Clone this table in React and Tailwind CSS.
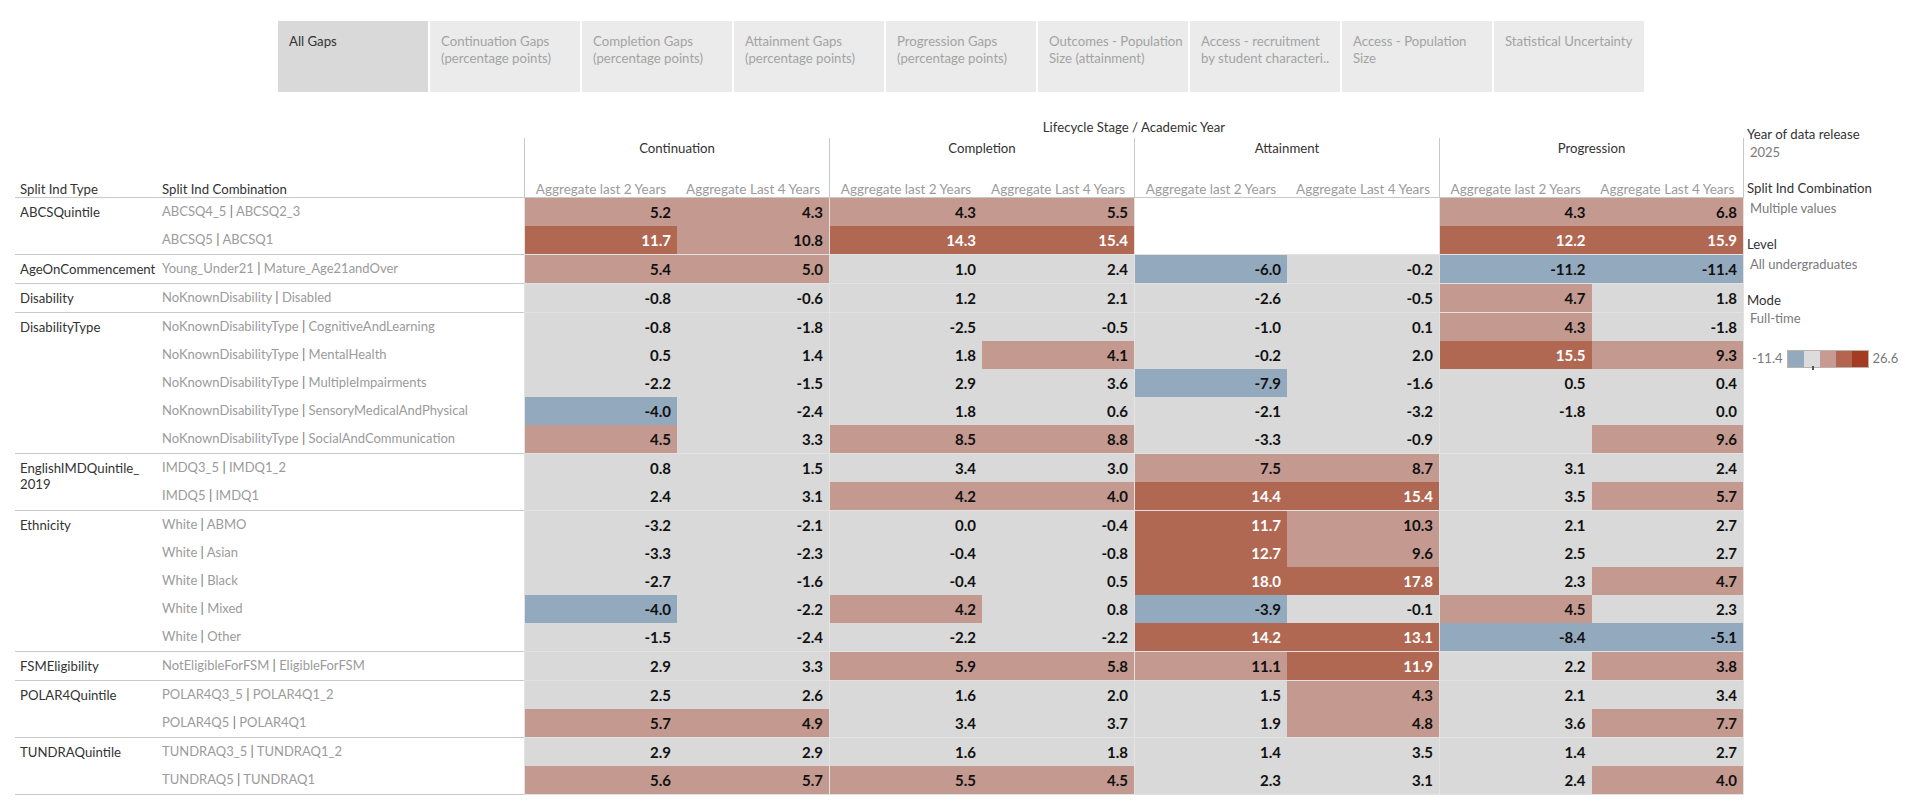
import React from 'react';

const tabs = [
  ['All Gaps', ''],
  ['Continuation Gaps', '(percentage points)'],
  ['Completion Gaps', '(percentage points)'],
  ['Attainment Gaps', '(percentage points)'],
  ['Progression Gaps', '(percentage points)'],
  ['Outcomes - Population', 'Size (attainment)'],
  ['Access - recruitment', 'by student characteri..'],
  ['Access - Population', 'Size'],
  ['Statistical Uncertainty', ''],
];

const stages = ['Continuation', 'Completion', 'Attainment', 'Progression'];

// last letter of each token is the cell tone
const tone = {
  g: 'bg-[#d9d9d9] text-[#111]',
  l: 'bg-[#c49a90] text-[#111]',
  d: 'bg-[#b06853] text-white',
  b: 'bg-[#93a9bd] text-[#111]',
  w: 'bg-white',
  e: 'bg-[#d9d9d9]',
};

const groups = [
  { type: ['ABCSQuintile'], rows: [
    ['ABCSQ4_5 | ABCSQ2_3', '5.2l 4.3l 4.3l 5.5l w w 4.3l 6.8l'],
    ['ABCSQ5 | ABCSQ1', '11.7d 10.8l 14.3d 15.4d w w 12.2d 15.9d'],
  ] },
  { type: ['AgeOnCommencement'], rows: [
    ['Young_Under21 | Mature_Age21andOver', '5.4l 5.0l 1.0g 2.4g -6.0b -0.2g -11.2b -11.4b'],
  ] },
  { type: ['Disability'], rows: [
    ['NoKnownDisability | Disabled', '-0.8g -0.6g 1.2g 2.1g -2.6g -0.5g 4.7l 1.8g'],
  ] },
  { type: ['DisabilityType'], rows: [
    ['NoKnownDisabilityType | CognitiveAndLearning', '-0.8g -1.8g -2.5g -0.5g -1.0g 0.1g 4.3l -1.8g'],
    ['NoKnownDisabilityType | MentalHealth', '0.5g 1.4g 1.8g 4.1l -0.2g 2.0g 15.5d 9.3l'],
    ['NoKnownDisabilityType | MultipleImpairments', '-2.2g -1.5g 2.9g 3.6g -7.9b -1.6g 0.5g 0.4g'],
    ['NoKnownDisabilityType | SensoryMedicalAndPhysical', '-4.0b -2.4g 1.8g 0.6g -2.1g -3.2g -1.8g 0.0g'],
    ['NoKnownDisabilityType | SocialAndCommunication', '4.5l 3.3g 8.5l 8.8l -3.3g -0.9g e 9.6l'],
  ] },
  { type: ['EnglishIMDQuintile_', '2019'], rows: [
    ['IMDQ3_5 | IMDQ1_2', '0.8g 1.5g 3.4g 3.0g 7.5l 8.7l 3.1g 2.4g'],
    ['IMDQ5 | IMDQ1', '2.4g 3.1g 4.2l 4.0l 14.4d 15.4d 3.5g 5.7l'],
  ] },
  { type: ['Ethnicity'], rows: [
    ['White | ABMO', '-3.2g -2.1g 0.0g -0.4g 11.7d 10.3l 2.1g 2.7g'],
    ['White | Asian', '-3.3g -2.3g -0.4g -0.8g 12.7d 9.6l 2.5g 2.7g'],
    ['White | Black', '-2.7g -1.6g -0.4g 0.5g 18.0d 17.8d 2.3g 4.7l'],
    ['White | Mixed', '-4.0b -2.2g 4.2l 0.8g -3.9b -0.1g 4.5l 2.3g'],
    ['White | Other', '-1.5g -2.4g -2.2g -2.2g 14.2d 13.1d -8.4b -5.1b'],
  ] },
  { type: ['FSMEligibility'], rows: [
    ['NotEligibleForFSM | EligibleForFSM', '2.9g 3.3g 5.9l 5.8l 11.1l 11.9d 2.2g 3.8l'],
  ] },
  { type: ['POLAR4Quintile'], rows: [
    ['POLAR4Q3_5 | POLAR4Q1_2', '2.5g 2.6g 1.6g 2.0g 1.5g 4.3l 2.1g 3.4g'],
    ['POLAR4Q5 | POLAR4Q1', '5.7l 4.9l 3.4g 3.7g 1.9g 4.8l 3.6g 7.7l'],
  ] },
  { type: ['TUNDRAQuintile'], rows: [
    ['TUNDRAQ3_5 | TUNDRAQ1_2', '2.9g 2.9g 1.6g 1.8g 1.4g 3.5g 1.4g 2.7g'],
    ['TUNDRAQ5 | TUNDRAQ1', '5.6l 5.7l 5.5l 4.5l 2.3g 3.1g 2.4g 4.0l'],
  ] },
];

function parse(str) {
  return str.split(' ').map((t) => ({ v: t.slice(0, -1), k: t.slice(-1) }));
}

function Combo({ text }) {
  const [a, b] = text.split(' | ');
  return (
    <span className="text-[#9b9b9b]">
      {a} <span className="text-[#6f6f6f]">|</span> {b}
    </span>
  );
}

function Tabs() {
  return (
    <div className="flex gap-[2px] ml-[278px] pt-[21px]">
      {tabs.map(([a, b], i) => (
        <div
          key={i}
          className={`w-[150px] h-[71px] pl-[11px] pt-[12px] text-[13.2px] leading-[17px] ${i === 0 ? 'bg-[#d9d9d9] text-[#333]' : 'bg-[#ebebeb] text-[#a3a3a3]'}`}
        >
          <div>{a}</div>
          {b && <div>{b}</div>}
        </div>
      ))}
    </div>
  );
}

function Header() {
  return (
    <div>
      <div className="flex h-[17px] pt-[1px] leading-[16px] text-[13.2px] text-[#333]">
        <div className="w-[509px]" />
        <div className="w-[1220px] text-center">Lifecycle Stage / Academic Year</div>
      </div>
      <div className="flex mt-[3px] border-b border-[#c8c8c8]">
        <div className="w-[509px] flex items-end pb-[0px] text-[13.2px] leading-[16px] text-[#333]">
          <div className="w-[147px] pl-[5px]">Split Ind Type</div>
          <div className="flex-1">Split Ind Combination</div>
        </div>
        {stages.map((s, i) => (
          <div key={s} className={`w-[305px] h-[59px] flex flex-col border-l border-[#c8c8c8] ${i === 3 ? 'border-r' : ''}`}>
            <div className="h-[39px] pt-[1px] text-center text-[13.2px] leading-[18px] text-[#333]">{s}</div>
            <div className="flex-1 flex items-end text-[13.5px] leading-[16px] text-[#9b9b9b]">
              <div className="flex-1 text-center">Aggregate last 2 Years</div>
              <div className="flex-1 text-center">Aggregate Last 4 Years</div>
            </div>
          </div>
        ))}
      </div>
    </div>
  );
}

function Group({ g }) {
  return (
    <div className="flex">
      <div className="w-[509px] flex border-b border-[#c8c8c8] text-[13px]">
        <div className="w-[147px] pl-[5px] pt-[6px] leading-[16px] text-[13.2px] text-[#333]">
          {g.type.map((t) => (
            <div key={t}>{t}</div>
          ))}
        </div>
        <div className="flex-1">
          {g.rows.map(([c]) => (
            <div key={c} className="h-[28px] flex items-center">
              <Combo text={c} />
            </div>
          ))}
        </div>
      </div>
      <div className="w-[1220px] border-b border-[#e2e2e2]">
        {g.rows.map(([c, vals]) => {
          const cells = parse(vals);
          return (
            <div key={c} className="h-[28px] flex">
              {[0, 1, 2, 3].map((s) => (
                <div key={s} className={`w-[305px] flex border-l border-[#e2e2e2] ${s === 3 ? 'border-r' : ''}`}>
                  {cells.slice(s * 2, s * 2 + 2).map((cell, j) => (
                    <div
                      key={j}
                      className={`flex-1 flex items-center justify-end pr-[6px] text-[15px] font-bold ${tone[cell.k]}`}
                    >
                      {cell.v}
                    </div>
                  ))}
                </div>
              ))}
            </div>
          );
        })}
      </div>
    </div>
  );
}

function Legend() {
  const title = 'text-[13.2px] leading-[18px] text-[#333]';
  const value = 'pl-[3px] text-[13px] leading-[18px] text-[#7a7a7a]';
  return (
    <div className="pl-[3px] pt-[7px]">
      <div className={title}>Year of data release</div>
      <div className={value}>2025</div>
      <div className={`${title} mt-[18px]`}>Split Ind Combination</div>
      <div className={`${value} mt-[2px]`}>Multiple values</div>
      <div className={`${title} mt-[18px]`}>Level</div>
      <div className={`${value} mt-[2px]`}>All undergraduates</div>
      <div className={`${title} mt-[18px]`}>Mode</div>
      <div className={value}>Full-time</div>
      <div className="flex items-center gap-[4px] mt-[22px] pl-[5px] text-[13px] text-[#7a7a7a]">
        <span>-11.4</span>
        <div className="relative flex border border-[#bdb3ad]">
          <div className="w-[16px] h-[16px] bg-[#92a9be]" />
          <div className="w-[16px] h-[16px] bg-[#dcdcdc]" />
          <div className="w-[16px] h-[16px] bg-[#c79b92]" />
          <div className="w-[16px] h-[16px] bg-[#b3654f]" />
          <div className="w-[16px] h-[16px] bg-[#a33c23]" />
          <div className="absolute left-[24px] bottom-[-3px] w-[2px] h-[4px] bg-[#555]" />
        </div>
        <span>26.6</span>
      </div>
    </div>
  );
}

export default function App() {
  return (
    <div className="w-[1920px] h-[808px] bg-white overflow-hidden font-['Lato','Open_Sans',sans-serif]">
      <Tabs />
      <div className="flex mt-[26px]">
        <div className="ml-[15px] w-[1729px]">
          <Header />
          {groups.map((g) => (
            <Group key={g.type[0]} g={g} />
          ))}
        </div>
        <Legend />
      </div>
    </div>
  );
}
